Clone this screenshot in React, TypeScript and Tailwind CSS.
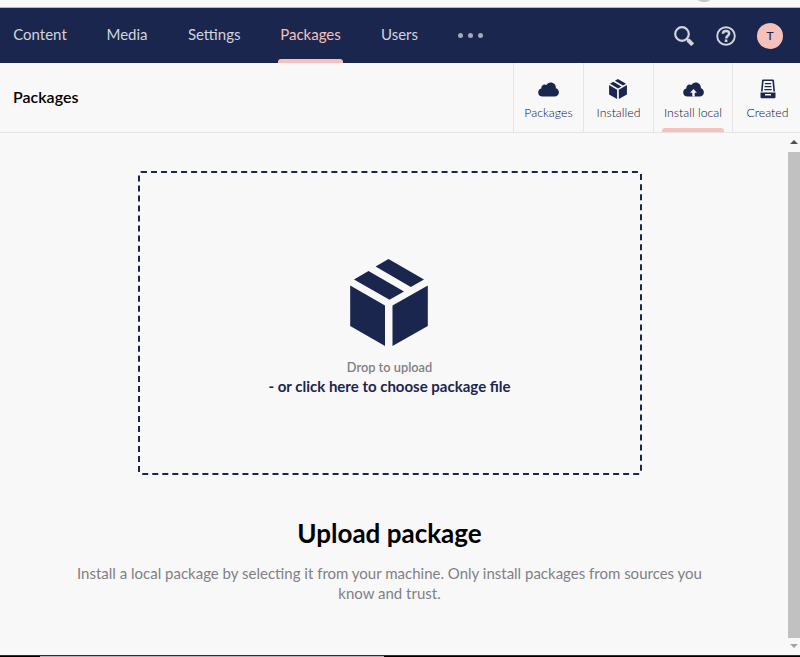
import type { ReactNode } from "react";

const navItems = [
  { label: "Content", spot: "w-[54px] ml-[13px]" },
  { label: "Media", spot: "w-[41px] ml-[39.5px]" },
  { label: "Settings", spot: "w-[53px] ml-[40.2px]" },
  { label: "Packages", spot: "w-[61px] ml-[39.3px]", active: true },
  { label: "Users", spot: "w-[37px] ml-[40px]" },
];

function PackageIcon({ className }: { className: string }) {
  return (
    <svg viewBox="0 0 78 87" className={className} fill="currentColor" aria-hidden="true">
      <path d="M38.500 0 74 20.500 60.800 28 25.600 7.600Z" />
      <path d="M18.500 12 54 32.500 39.500 40.800 4 20.500Z" />
      <path d="M.2 26.400 35 46.500V87L.2 67Z" />
      <path d="M77.800 26.400 42.500 46.500V87L77.800 67Z" />
    </svg>
  );
}

function CloudIcon({ upload = false }: { upload?: boolean }) {
  return (
    <svg width="21" height="15" viewBox="0 0 21 15" fill="currentColor" aria-hidden="true">
      <path d="M4.500 14.500C2 14.500.2 12.900.2 10.500c0-2 1.300-3.500 3.100-3.900C3 4.200 4.700 2.400 6.700 2.400c.6 0 1.200.2 1.700.5C9.200 1.400 10.800.5 12.700.5c3.100 0 5.200 2.300 5.200 5.200v.5c1.800.6 3 2.100 3 4.100 0 2.500-1.800 4.200-4.300 4.200z" />
      {upload && <path fill="#f8f8f8" d="m10.500 7 3.400 3.800h-2.200v3.800H9.300v-3.800H7.100z" />}
    </svg>
  );
}

function DrawerIcon() {
  return (
    <svg width="16" height="20" viewBox="0 0 16 20" fill="currentColor" aria-hidden="true">
      <path d="M3 .5h10c.6 0 .9.3 1 .9l1 11.100h-1.600L12.400 2H3.600L2.600 12.500H1L2 1.400C2.100.8 2.400.5 3 .5Z" />
      <path d="M4.900 4h6.200v1.200H4.900zM4.600 7h6.800v1.200H4.600zM4.300 10h7.400v1.200H4.300z" />
      <path fillRule="evenodd" d="M.5 13.500h15v4.200c0 1-.5 1.500-1.400 1.500H1.900c-.9 0-1.400-.5-1.400-1.500zM5 15v1.500h6V15z" />
    </svg>
  );
}

function Tab({ label, icon, size, active }: { label: string; icon: ReactNode; size: string; active?: boolean }) {
  return (
    <div className={`flex h-[69px] flex-none flex-col items-center border-l border-[#e5e5e8] pt-4 ${size}`}>
      <div className="flex h-5 items-center">{icon}</div>
      <div className="mt-[5px] h-[18px] whitespace-nowrap text-[12.3px] font-light leading-[18px] text-[#080f38]">{label}</div>
      {active && <div className="mt-[6px] h-1 w-[62px] rounded-t-[3px] bg-[#f5c1bc]" />}
    </div>
  );
}

export default function App() {
  return (
    <div className="flex h-[657px] w-[800px] flex-col overflow-hidden bg-[#f8f8f8] font-['Lato',sans-serif] text-[#1b264f]">
      <div className="flex h-2 flex-none items-start justify-end overflow-hidden border-b border-[#b8b3c0] pr-[87px]">
        <div className="-mt-[14px] h-4 w-[18px] flex-none rounded-full border-2 border-[#c4c4c4]" />
      </div>

      <header className="flex h-[55px] flex-none bg-[#1b264f] text-[15px] text-[#d1d4dc]">
        <nav className="flex">
          {navItems.map(({ label, spot, active }) => (
            <div key={label} className={`flex flex-none flex-col items-center ${spot} ${active ? "text-[#f5c1bc]" : ""}`}>
              <span className="mt-4 h-5 whitespace-nowrap leading-5">{label}</span>
              {active && <span className="mt-[15px] h-1 w-[65px] rounded-t-[3px] bg-[#f5c1bc]" />}
            </div>
          ))}
        </nav>
        <div className="ml-[40px] flex items-center gap-[5px]">
          <i className="h-[5px] w-[5px] rounded-full bg-[#a4a8b9]" />
          <i className="h-[5px] w-[5px] rounded-full bg-[#a4a8b9]" />
          <i className="h-[5px] w-[5px] rounded-full bg-[#a4a8b9]" />
        </div>
        <div className="ml-auto flex items-center pr-[17px] pt-[1px]">
          <svg width="20" height="20" viewBox="0 0 20 20" fill="none" stroke="currentColor" aria-hidden="true">
            <circle cx="8" cy="8" r="6.800" strokeWidth="2.200" />
            <path d="m13 13 1.500 1.500" strokeWidth="2.400" />
            <path d="m14 14 4.700 4.700" strokeWidth="4" />
          </svg>
          <svg className="ml-[22px]" width="20" height="20" viewBox="0 0 20 20" fill="none" stroke="currentColor" aria-hidden="true">
            <circle cx="10" cy="10" r="8.800" strokeWidth="1.900" />
            <path d="M6.900 7.700C6.900 5.700 8.100 4.900 10 4.900s3.200 1 3.200 2.700c0 2.200-3 2.200-3 4.900" strokeWidth="2.500" />
            <path d="M10.100 13.500V16" strokeWidth="2.600" />
          </svg>
          <div className="ml-[21px] flex h-[26px] w-[26px] items-center justify-center rounded-full bg-[#f5c1bc] text-[12px] font-medium text-[#1b264f]">
            T
          </div>
        </div>
      </header>

      <div className="flex h-[70px] flex-none border-b border-[#e5e5e8]">
        <h1 className="flex-1 pl-[13px] pt-6 text-[16px] font-semibold leading-5 text-black">Packages</h1>
        <Tab label="Packages" icon={<CloudIcon />} size="w-[70px]" />
        <Tab label="Installed" icon={<PackageIcon className="mr-px h-5 w-[18px]" />} size="w-[70px]" />
        <Tab label="Install local" icon={<CloudIcon upload />} size="w-[79px]" active />
        <Tab label="Created" icon={<DrawerIcon />} size="w-[68px] pl-[2px]" />
      </div>

      <div className="flex min-h-0 flex-1">
        <main className="flex w-[779px] flex-none flex-col items-center pt-[38px] text-center">
          <div className="ml-px flex h-[304px] w-[504px] flex-none flex-col items-center rounded-[3px] border-2 border-dashed border-[#1b264f] pr-px pt-[86px]">
            <PackageIcon className="mr-px h-[87px] w-[78px]" />
            <div className="mt-[11px] text-[12.800px] font-semibold leading-5 text-[#817f85]">Drop to upload</div>
            <div className="text-[15px] font-bold leading-[19px]">- or click here to choose package file</div>
          </div>
          <h2 className="mt-[41px] text-[26px] font-bold leading-[34px] text-black">Upload package</h2>
          <p className="mt-[13px] text-[15px] leading-5 text-[#817f85]">
            Install a local package by selecting it from your machine. Only install packages from sources you
            <br />
            know and trust.
          </p>
        </main>
        <div className="ml-[9px] flex w-3 flex-none flex-col items-center">
          <svg className="mt-[7px] flex-none" width="8" height="4" viewBox="0 0 8 4" aria-hidden="true">
            <path d="M4 0 8 4H0Z" fill="#505050" />
          </svg>
          <div className="mt-2 h-[486px] w-3 flex-none bg-[#c1c1c1]" />
          <svg className="mt-[6px] flex-none" width="8" height="4" viewBox="0 0 8 4" aria-hidden="true">
            <path d="M0 0h8L4 4Z" fill="#a3a3a3" />
          </svg>
        </div>
      </div>

      <footer className="flex h-[2px] flex-none flex-col bg-black">
        <div className="h-px bg-[#25303c]" />
        <div className="ml-10 h-px w-[344px] bg-[#b1b2bb]" />
      </footer>
    </div>
  );
}
